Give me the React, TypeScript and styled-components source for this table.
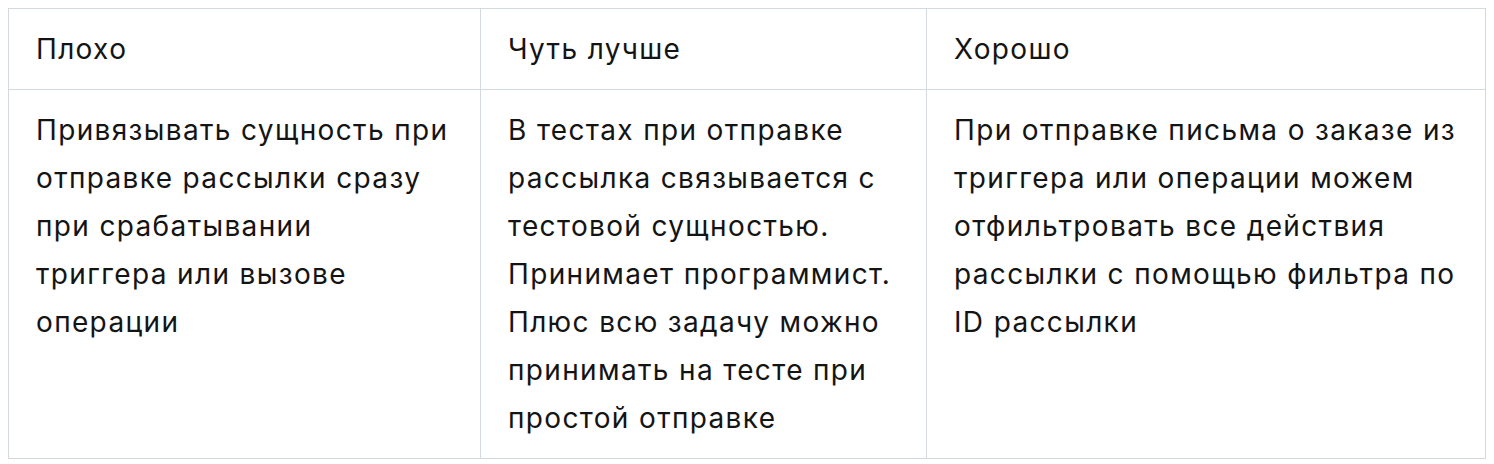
import React from "react";
import styled, { createGlobalStyle } from "styled-components";

const Global = createGlobalStyle`
  body {
    margin: 8px;
    background: #ffffff;
    font-family: Inter, "Liberation Sans", Arial, sans-serif;
  }
`;

const Table = styled.table`
  width: 100%;
  border-collapse: collapse;
  table-layout: fixed;
  color: #141414;
  font-size: 28px;
  letter-spacing: 1.35px;
  line-height: 48px;
`;

const Col = styled.col<{ $w?: number }>`
  width: ${(p) => (p.$w ? `${p.$w}px` : "auto")};
`;

const HeadCell = styled.th`
  border: 1px solid #d3d9dc;
  padding: 16px 27px;
  text-align: left;
  font-weight: 400;
  vertical-align: top;
`;

const Cell = styled.td`
  border: 1px solid #d3d9dc;
  padding: 16px 27px;
  text-align: left;
  vertical-align: top;
`;

const headers = ["Плохо", "Чуть лучше", "Хорошо"];
const body = [
  "Привязывать сущность при отправке рассылки сразу при срабатывании триггера или вызове операции",
  "В тестах при отправке рассылка связывается с тестовой сущностью. Принимает программист. Плюс всю задачу можно принимать на тесте при простой отправке",
  "При отправке письма о заказе из триггера или операции можем отфильтровать все действия рассылки с помощью фильтра по ID рассылки",
];

export default function App() {
  return (
    <>
      <Global />
      <Table>
        <colgroup>
          <Col $w={472} />
          <Col $w={446} />
          <Col />
        </colgroup>
        <thead>
          <tr>
            {headers.map((h) => (
              <HeadCell key={h}>{h}</HeadCell>
            ))}
          </tr>
        </thead>
        <tbody>
          <tr>
            {body.map((t, i) => (
              <Cell key={i}>{t}</Cell>
            ))}
          </tr>
        </tbody>
      </Table>
    </>
  );
}
